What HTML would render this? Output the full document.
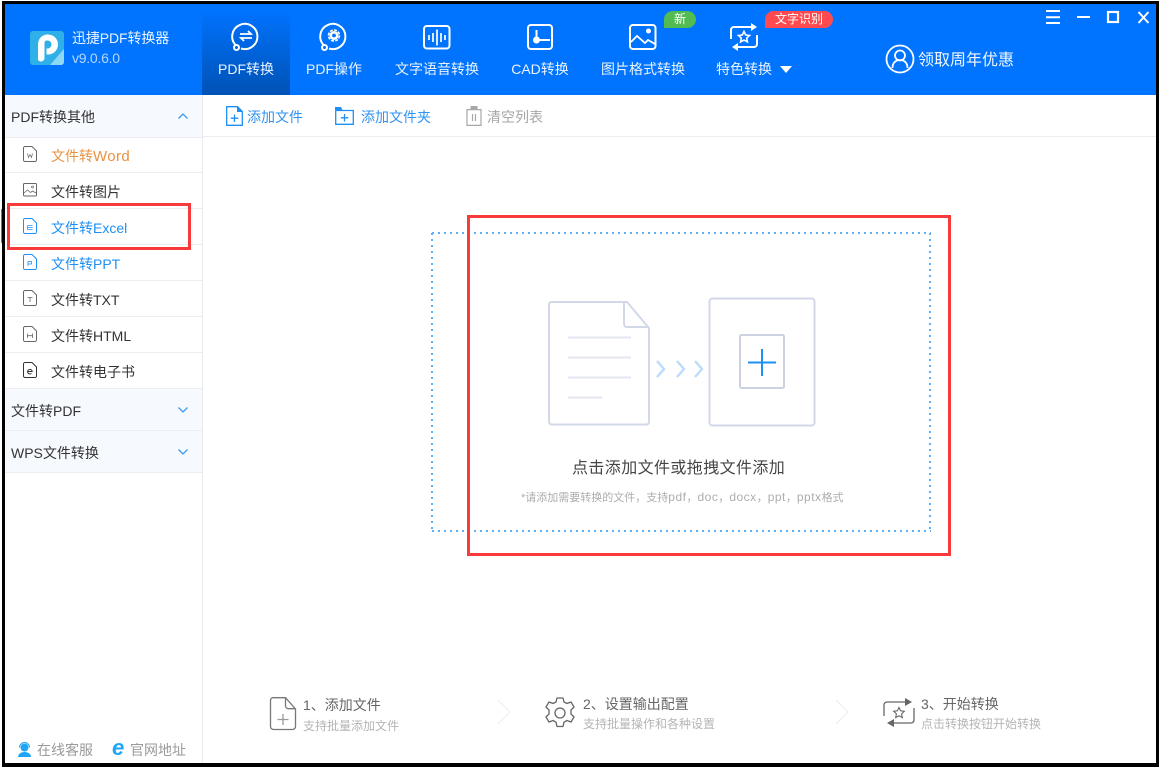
<!DOCTYPE html>
<html lang="zh"><head><meta charset="utf-8"><style>
html,body{margin:0;padding:0;background:#fff}
body{width:1162px;height:770px;position:relative;overflow:hidden;font-family:"Liberation Sans","Noto Sans CJK SC",sans-serif;font-size:14px;color:#333}
.a{position:absolute;white-space:nowrap}
.t{position:absolute;white-space:nowrap;line-height:20px;height:20px}
svg{position:absolute;overflow:visible}
.nav{color:#e9f3ff;font-size:14px;text-align:center}
.line{position:absolute;left:5px;width:197px;height:1px;background:#ebedf0}
.sec{position:absolute;left:5px;width:197px;background:#f6f9fe}
</style></head><body>
<div class="a" style="left:5px;top:4px;width:1151px;height:91px;background:#0073ff"></div>
<div class="a" style="left:202px;top:10px;width:88px;height:85px;background:linear-gradient(#0073ff,#0052b5)"></div>

<!-- logo -->
<svg style="left:30px;top:31px" width="34" height="34" viewBox="0 0 34 34"><rect width="34" height="34" rx="3" fill="#2fb0e8"/><path d="M20 34L34 18V31a3 3 0 0 1-3 3z" fill="#8fd8f4"/><path d="M8 29V13a9.500 9.500 0 0 1 9.500-9.500h.5a10 10 0 0 1 0 20h-1.500v-6h1a4 4 0 0 0 0-8h-1a2.500 2.500 0 0 0-2 2.500v15a3.500 3.500 0 0 1-7 0z" fill="#fff"/></svg>
<div class="t" style="left:72px;top:28px;color:#eaf4ff;letter-spacing:-.1px">迅捷PDF转换器</div>
<div class="t" style="left:72px;top:48px;color:#b4d6ff;letter-spacing:-.25px">v9.0.6.0</div>

<!-- nav icons -->
<svg style="left:232px;top:22px" width="28" height="30" viewBox="0 0 28 30" fill="none" stroke="#fff" stroke-width="2"><path d="M4 23.500A12.600 12.600 0 1 1 9 26.500"/><circle cx="4.500" cy="25.500" r="2.500"/><path d="M8 12h11l-3-3M20 16H9l3 3" stroke-width="1.800"/></svg>
<svg style="left:320px;top:22px" width="28" height="30" viewBox="0 0 28 30" fill="none" stroke="#fff" stroke-width="2"><path d="M4 23.500A12.600 12.600 0 1 1 9 26.500"/><circle cx="4.500" cy="25.500" r="2.500"/><circle cx="14" cy="13.500" r="3.200" stroke-width="2.600"/><circle cx="14" cy="13.500" r="5.500" stroke-width="1.600" stroke-dasharray="3 1.300"/></svg>
<svg style="left:423px;top:25px" width="28" height="25" viewBox="0 0 28 25" fill="none" stroke="#fff" stroke-width="2"><rect x="1" y="1" width="25.500" height="22.500" rx="3"/><path d="M6 10v5M10 8v9M14 4.500v16M18 8v9M22 10v5" stroke-width="1.700"/></svg>
<svg style="left:527px;top:24px" width="27" height="26" viewBox="0 0 27 26" fill="none" stroke="#fff" stroke-width="2"><rect x="1" y="1" width="24" height="24" rx="3"/><path d="M9.500 6v13M12 16h11"/><circle cx="9.500" cy="16" r="3.500" fill="#fff" stroke="none"/></svg>
<svg style="left:629px;top:24px" width="28" height="26" viewBox="0 0 28 26" fill="none" stroke="#fff" stroke-width="2"><rect x="1" y="1" width="25.500" height="24" rx="3"/><path d="M2 18l6-6 8 7 3-3 7 4" stroke-width="1.800"/><circle cx="19.500" cy="7" r="2.500" fill="#fff" stroke="none"/></svg>
<svg style="left:730px;top:23px" width="28" height="28" viewBox="0 0 28 28" fill="none" stroke="#fff" stroke-width="2"><path d="M1 16V7a3 3 0 0 1 3-3h19"/><path d="M27 12v9a3 3 0 0 1-3 3H6"/><path d="M21 0l6 4-6 4zM8 20l-6 4 6 4z" fill="#fff" stroke="none"/><path d="M14 8.500l1.700 3.500 3.800.5-2.800 2.600.7 3.800-3.400-1.900-3.400 1.900.7-3.800-2.800-2.600 3.800-.5z" stroke-width="1.600"/></svg>

<div class="t nav" style="left:202px;width:88px;top:59px">PDF转换</div>
<div class="t nav" style="left:290px;width:88px;top:59px">PDF操作</div>
<div class="t nav" style="left:393px;width:88px;top:59px">文字语音转换</div>
<div class="t nav" style="left:496px;width:88px;top:59px">CAD转换</div>
<div class="t nav" style="left:599px;width:88px;top:59px">图片格式转换</div>
<div class="t nav" style="left:716px;top:59px">特色转换</div>
<svg style="left:780px;top:66px" width="12" height="7"><path d="M0 0h12L6 7z" fill="#fff"/></svg>

<div class="t" style="left:664px;top:11px;width:32px;height:17px;line-height:17px;background:#52bc52;border-radius:9px 9px 9px 0;color:#fff;font-size:12px;text-align:center">新</div>
<div class="t" style="left:765px;top:11px;width:68px;height:17px;line-height:17px;background:#ff4b4f;border-radius:9px 9px 9px 0;color:#fff;font-size:12px;text-align:center">文字识别</div>

<svg style="left:885px;top:44px" width="30" height="30" viewBox="0 0 30 30" fill="none" stroke="#fff" stroke-width="1.800"><circle cx="15" cy="15" r="13.500"/><circle cx="15" cy="11.500" r="5"/><path d="M7.500 24c0-5 3-8 7.500-8s7.500 3 7.500 8"/></svg>
<div class="t" style="left:918px;top:51px;font-size:16px;color:#f0f7ff">领取周年优惠</div>

<!-- window controls -->
<svg style="left:1040px;top:8px" width="112" height="20" fill="none" stroke="#fff" stroke-width="2"><path d="M6 3h14M6 9.300h14M6 15h14"/><path d="M37 9h13"/><rect x="68" y="4" width="10" height="10" stroke-width="2.200"/><path d="M98.500 4l10 11M108.500 4l-10 11"/></svg>

<!-- sidebar -->
<div class="a" style="left:202px;top:95px;width:1px;height:668px;background:#e8ecf1"></div>
<div class="sec" style="top:95px;height:42px"></div>
<div class="line" style="top:137px"></div>
<div class="t" style="left:11px;top:107px">PDF转换其他</div>
<svg style="left:178px;top:113px" width="10" height="6" fill="none" stroke="#3c9cf5" stroke-width="1.300"><path d="M.5 5.500L5 1l4.500 4.500"/></svg>

<svg style="left:23px;top:146px" width="14" height="16" fill="none" stroke="#666" stroke-width="1"><path d="M.5 2a1.500 1.500 0 0 1 1.500-1.500h7l4.500 4.500v9a1.500 1.500 0 0 1-1.500 1.500H2a1.500 1.500 0 0 1-1.500-1.500z"/><path d="M4.500 7.500l1 4 1.500-3 1.500 3 1-4" stroke-width=".7"/></svg>
<div class="t" style="left:51px;top:146px;color:#ea9240">文件转<span style="font-size:15px;letter-spacing:.4px">Word</span></div>
<div class="line" style="top:172px"></div>
<svg style="left:23px;top:183px" width="14" height="14" fill="none" stroke="#666" stroke-width="1"><rect x=".5" y=".5" width="13" height="12.500" rx="1"/><path d="M1 10l3.500-3 3 2.500 2-1.500 3.500 2" stroke-width=".8"/><circle cx="9.500" cy="4" r="1" stroke-width=".7"/></svg>
<div class="t" style="left:51px;top:182px">文件转图片</div>
<div class="line" style="top:208px"></div>
<svg style="left:23px;top:218px" width="14" height="16" fill="none" stroke="#1e90f5" stroke-width="1"><path d="M.5 2a1.500 1.500 0 0 1 1.500-1.500h7l4.500 4.500v9a1.500 1.500 0 0 1-1.500 1.500H2a1.500 1.500 0 0 1-1.500-1.500z"/><path d="M4.500 7.500h5M4.500 9.500h5M4.500 11.500h5M4.500 7.500v4" stroke-width=".7"/></svg>
<div class="t" style="left:51px;top:218px;color:#1e90f5">文件转Excel</div>
<div class="a" style="left:1px;top:209px;width:1px;height:34px;background:#2a8df0"></div>
<div class="line" style="top:244px"></div>
<svg style="left:23px;top:254px" width="14" height="16" fill="none" stroke="#1e90f5" stroke-width="1"><path d="M.5 2a1.500 1.500 0 0 1 1.500-1.500h7l4.500 4.500v9a1.500 1.500 0 0 1-1.500 1.500H2a1.500 1.500 0 0 1-1.500-1.500z"/><path d="M5 12V7.500h3.500v2.500H5" stroke-width=".8"/></svg>
<div class="t" style="left:51px;top:254px;color:#1e90f5">文件转PPT</div>
<div class="line" style="top:280px"></div>
<svg style="left:23px;top:290px" width="14" height="16" fill="none" stroke="#666" stroke-width="1"><path d="M.5 2a1.500 1.500 0 0 1 1.500-1.500h7l4.500 4.500v9a1.500 1.500 0 0 1-1.500 1.500H2a1.500 1.500 0 0 1-1.500-1.500z"/><path d="M4.500 7.500h5M7 7.500V12" stroke-width=".8"/></svg>
<div class="t" style="left:51px;top:290px">文件转TXT</div>
<div class="line" style="top:316px"></div>
<svg style="left:23px;top:326px" width="14" height="16" fill="none" stroke="#666" stroke-width="1"><path d="M.5 2a1.500 1.500 0 0 1 1.500-1.500h7l4.500 4.500v9a1.500 1.500 0 0 1-1.500 1.500H2a1.500 1.500 0 0 1-1.500-1.500z"/><path d="M4.500 7.500V12M9.500 7.500V12M4.500 9.700h5" stroke-width=".8"/></svg>
<div class="t" style="left:51px;top:326px">文件转HTML</div>
<div class="line" style="top:352px"></div>
<svg style="left:23px;top:362px" width="14" height="16" fill="none" stroke="#333" stroke-width="1"><path d="M.5 2a1.500 1.500 0 0 1 1.500-1.500h7l4.500 4.500v9a1.500 1.500 0 0 1-1.500 1.500H2a1.500 1.500 0 0 1-1.500-1.500z"/><path d="M4.700 9.500h4.500a2.300 2.300 0 1 0-.7 1.800"/></svg>
<div class="t" style="left:51px;top:362px">文件转电子书</div>
<div class="line" style="top:388px"></div>
<div class="sec" style="top:389px;height:41px"></div>
<div class="t" style="left:11px;top:401px">文件转PDF</div>
<svg style="left:178px;top:407px" width="10" height="6" fill="none" stroke="#3c9cf5" stroke-width="1.300"><path d="M.5.500L5 5l4.500-4.500"/></svg>
<div class="line" style="top:430px"></div>
<div class="sec" style="top:431px;height:41px"></div>
<div class="t" style="left:11px;top:443px">WPS文件转换</div>
<svg style="left:178px;top:449px" width="10" height="6" fill="none" stroke="#3c9cf5" stroke-width="1.300"><path d="M.5.500L5 5l4.500-4.500"/></svg>
<div class="line" style="top:472px"></div>

<!-- sidebar footer -->
<svg style="left:17px;top:742px" width="15" height="16"><circle cx="7.500" cy="5.500" r="4" fill="#1ea5f5"/><path d="M2.500 5.500a5 5 0 0 1 10 0" fill="none" stroke="#1ea5f5"/><path d="M1 15c0-3 3-5 6.500-5S14 12 14 15z" fill="#1ea5f5"/></svg>
<div class="t" style="left:37px;top:740px;color:#9a9a9a">在线客服</div>
<svg style="left:112px;top:741px" width="15" height="16" viewBox="0 0 15 16"><text x="0" y="14" font-family="Liberation Sans" font-size="22" font-weight="bold" font-style="italic" fill="#1ea5f5">e</text></svg>
<div class="t" style="left:130px;top:740px;color:#9a9a9a">官网地址</div>

<!-- toolbar -->
<div class="a" style="left:203px;top:136px;width:953px;height:1px;background:#ebedf0"></div>
<svg style="left:226px;top:106px" width="17" height="20" fill="none" stroke="#1e90f5" stroke-width="1.300"><path d="M.7.700h10.800l4.800 4.800v13.800H.7z"/><path d="M11 .6h1l4.400 4.400v1H11z" fill="#1e90f5" stroke="none"/><path d="M8.500 8.500v7.500M4.800 12.200h7.500"/></svg>
<div class="t" style="left:247px;top:107px;color:#2f93f3">添加文件</div>
<svg style="left:335px;top:107px" width="19" height="18" fill="none" stroke="#1e90f5" stroke-width="1.300"><path d="M.7 3.500h17.600v13.800H.7z"/><path d="M0 0h6l1.500 3H0z" fill="#1e90f5" stroke="none"/><path d="M9.500 7v7.500M5.800 10.800h7.500"/></svg>
<div class="t" style="left:361px;top:107px;color:#2f93f3">添加文件夹</div>
<svg style="left:466px;top:106px" width="16" height="20" fill="none" stroke="#a8a8a8" stroke-width="1.200"><path d="M1 3.600h14v15.800H1z"/><path d="M4.500 0h7v3h-7z" fill="#a8a8a8" stroke="none"/><path d="M6.500 8v7M9.500 8v7"/></svg>
<div class="t" style="left:487px;top:107px;color:#a6a6a6">清空列表</div>

<!-- drop zone -->
<svg style="left:0;top:0" width="1162" height="770" fill="none">
<path d="M432 233H931M432 233V532M432 531H931M930 233V532" stroke="#5fb0f8" stroke-width="2" stroke-dasharray="2 4"/>
<path d="M552 302h75l22 26v94a2.500 2.500 0 0 1-2.500 2.500h-94.500a3 3 0 0 1-3-3v-117a2.500 2.500 0 0 1 3-2.500z" stroke="#d3d8e8" stroke-width="2"/>
<path d="M624 302v22a3 3 0 0 0 3 3h22" stroke="#d3d8e8" stroke-width="2"/>
<path d="M568 337.500h63M568 357.500h63M568 377.500h63M568 397.500h34" stroke="#e4e7f0" stroke-width="2"/>
<path d="M657 361l7 8-7 8M677 361l7 8-7 8M695 361l7 8-7 8" stroke="#bcdcfb" stroke-width="2.400"/>
<rect x="709.500" y="298.500" width="105" height="127" rx="3" stroke="#d3d8e8" stroke-width="2"/>
<rect x="740" y="335" width="44" height="53" rx="1.500" stroke="#cdd2e2" stroke-width="2"/>
<path d="M762 349v27M748 362.500h28" stroke="#1e90f5" stroke-width="2"/>
</svg>
<div class="t" style="left:572px;top:459px;font-size:16px;letter-spacing:.4px;color:#444">点击添加文件或拖拽文件添加</div>
<div class="t" style="left:521px;top:487px;font-size:11px;color:#adadad">*请添加需要转换的文件，支持<span style="font-size:12px;letter-spacing:.5px">pdf</span>，<span style="font-size:12px;letter-spacing:.5px">doc</span>，<span style="font-size:12px;letter-spacing:.5px">docx</span>，<span style="font-size:12px;letter-spacing:.5px">ppt</span>，<span style="font-size:12px;letter-spacing:.5px">pptx</span>格式</div>

<!-- steps -->
<svg style="left:270px;top:697px" width="26" height="33" fill="none" stroke="#777" stroke-width="1.300"><path d="M3.500.7h12l10 11.300v17.500a3 3 0 0 1-3 3h-19a3 3 0 0 1-3-3v-26a3 3 0 0 1 3-3z"/><path d="M15.500.7v8a3 3 0 0 0 3 3h7"/><path d="M13 17v11M7.500 22.500h11" stroke="#999"/></svg>
<div class="t" style="left:303px;top:695px;color:#666">1、添加文件</div>
<div class="t" style="left:303px;top:716px;font-size:12px;color:#b5b5b5">支持批量添加文件</div>
<svg style="left:497px;top:699px" width="14" height="26" fill="none" stroke="#eceef2"><path d="M1 1l12 12L1 25"/></svg>
<svg style="left:545px;top:697px" width="30" height="32" viewBox="0 0 30 32" fill="none" stroke="#666" stroke-width="1.300"><path d="M12 1h6l1 4 3 1.500 4-1.500 3 5-3 3v4l3 3-3 5-4-1.500-3 1.700-1 4.300h-6l-1-4.300-3-1.700-4 1.500-3-5 3-3v-4l-3-3 3-5 4 1.500 3-1.500z" stroke-linejoin="round"/><circle cx="15" cy="16" r="5"/></svg>
<div class="t" style="left:583px;top:694px;color:#666">2、设置输出配置</div>
<div class="t" style="left:583px;top:714px;font-size:12px;color:#b5b5b5">支持批量操作和各种设置</div>
<svg style="left:835px;top:699px" width="14" height="26" fill="none" stroke="#eceef2"><path d="M1 1l12 12L1 25"/></svg>
<svg style="left:883px;top:698px" width="32" height="32" fill="none" stroke="#666" stroke-width="1.300"><path d="M1 18V7a3 3 0 0 1 3-3h21"/><path d="M31 10v12a3 3 0 0 1-3 3H8"/><path d="M22 0l7 4-7 4zM11 21l-7 4 7 4z" fill="#666" stroke="none"/><path d="M16 9.500l1.600 3.300 3.700.5-2.700 2.600.7 3.700-3.300-1.800-3.300 1.800.7-3.700-2.700-2.600 3.700-.5z" stroke-width="1.100"/></svg>
<div class="t" style="left:921px;top:694px;color:#666">3、开始转换</div>
<div class="t" style="left:921px;top:714px;font-size:12px;color:#b5b5b5">点击转换按钮开始转换</div>

<!-- red boxes -->
<div class="a" style="left:7px;top:203px;width:184px;height:47px;box-sizing:border-box;border:3px solid #f83a3a"></div>
<div class="a" style="left:467px;top:215px;width:484px;height:341px;box-sizing:border-box;border:3px solid #f83a3a"></div>

<!-- black frame -->
<div class="a" style="left:2px;top:1px;width:1157px;height:766px;box-sizing:border-box;border:3px solid #000;border-width:3px 3px 4px 3px"></div>
</body></html>
